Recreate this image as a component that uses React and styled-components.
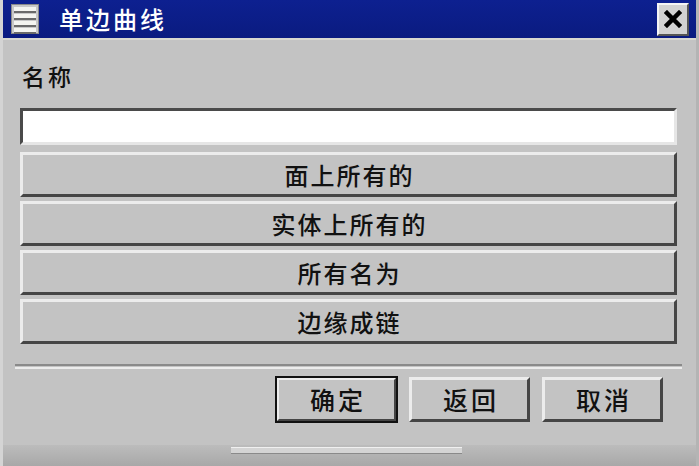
import React, { useState } from 'react';
import styled, { createGlobalStyle } from 'styled-components';

const GlobalStyle = createGlobalStyle`
  html, body {
    margin: 0;
    padding: 0;
    background: #c3c3c3;
  }
  body {
    font-family: "Noto Sans CJK SC", "Noto Sans", sans-serif;
  }
`;

const Window = styled.div`
  width: 699px;
  height: 466px;
  background: #c3c3c3;
  display: flex;
  flex-direction: column;
  box-sizing: border-box;
  border-left: 3px solid #d4d4d4;
  border-right: 3px solid #b4b4b4;
  overflow: hidden;
`;

const TitleBar = styled.div`
  height: 40px;
  flex-shrink: 0;
  margin-left: -3px;
  margin-right: -3px;
  background: linear-gradient(180deg, #0d2090 0%, #0a1b80 100%);
  border-bottom: 2px solid #d8d8d0;
  display: flex;
  align-items: center;
  padding: 0 11px 0 11px;
  box-sizing: border-box;
`;

const Title = styled.span`
  color: #ffffff;
  font-size: 24px;
  font-weight: 500;
  letter-spacing: 3px;
  margin-left: 20px;
  line-height: 1;
  flex: 1;
`;

const CloseButton = styled.button`
  width: 32px;
  height: 33px;
  padding: 0;
  background: #d2d2d2;
  border: 2px solid;
  border-color: #f4f4f4 #555 #555 #f4f4f4;
  display: flex;
  align-items: center;
  justify-content: center;
  margin-right: -1px;
`;

const Body = styled.div`
  flex: 1;
  display: flex;
  flex-direction: column;
  padding: 21px 19px 0 17px;
`;

const Label = styled.div`
  font-size: 23px;
  font-weight: 500;
  letter-spacing: 3px;
  color: #111;
  line-height: 30px;
  margin-left: 2px;
`;

const TextInput = styled.input`
  margin-top: 17px;
  height: 37px;
  box-sizing: border-box;
  background: #fff;
  border: 3px solid;
  border-color: #4a4a4a #e6e6e6 #e6e6e6 #4a4a4a;
  outline: none;
  font-size: 20px;
  padding: 0 6px;
`;

const ListButton = styled.button`
  margin-top: ${p => (p.first ? '7px' : '4px')};
  height: 45px;
  box-sizing: border-box;
  background: #c3c3c3;
  border: 3px solid;
  border-color: #ececec #454545 #454545 #ececec;
  font-family: inherit;
  font-size: 24px;
  font-weight: 500;
  letter-spacing: 2px;
  color: #111;
  padding: 0 0 0 2px;
  line-height: 1;
`;

const Separator = styled.div`
  margin: 20px -5px 0 -5px;
  height: 1px;
  border-top: 2px solid #8a8a8a;
  border-bottom: 2px solid #ececec;
`;

const Footer = styled.div`
  display: flex;
  justify-content: flex-end;
  gap: 12px;
  margin-top: 8px;
  padding-right: 14px;
`;

const ActionButton = styled.button`
  width: 121px;
  height: 45px;
  box-sizing: border-box;
  background: #c3c3c3;
  border: 3px solid;
  border-color: #ececec #454545 #454545 #ececec;
  outline: ${p => (p.primary ? '2px solid #111' : 'none')};
  outline-offset: -1px;
  font-family: inherit;
  font-size: 25px;
  font-weight: 500;
  letter-spacing: 3px;
  color: #111;
  padding: 0 0 0 3px;
  line-height: 1;
`;

const BottomStrip = styled.div`
  margin-top: auto;
  height: 21px;
  margin-left: -20px;
  margin-right: -22px;
  background: linear-gradient(180deg, #bcbcbc 0%, #a8a8a8 100%);
  display: flex;
  justify-content: center;
  padding-top: 2px;
  box-sizing: border-box;
`;

const Grip = styled.div`
  width: 231px;
  height: 5px;
  margin-right: 6px;
  background: #d4d4d4;
  border-top: 1px solid #f0f0f0;
  border-bottom: 1px solid #8a8a8a;
`;

function MenuIcon() {
  return (
    <svg width="28" height="30" viewBox="0 0 28 30">
      <rect x="0" y="0" width="28" height="30" fill="#c8c8c8" />
      <rect x="0" y="0" width="28" height="30" fill="none" stroke="#8a8a8a" strokeWidth="2" />
      {[3, 10, 17, 24].map(y => (
        <g key={y}>
          <rect x="3" y={y} width="22" height="4" fill="#f4f4f0" />
          <rect x="3" y={y + 4} width="22" height="2" fill="#6a6a6a" />
        </g>
      ))}
    </svg>
  );
}

function CloseIcon() {
  return (
    <svg width="18" height="18" viewBox="0 0 18 18">
      <path d="M3 3 L15 15 M15 3 L3 15" stroke="#000" strokeWidth="4.5" strokeLinecap="square" />
    </svg>
  );
}

export default function App() {
  const [name, setName] = useState('');
  const items = ['面上所有的', '实体上所有的', '所有名为', '边缘成链'];

  return (
    <>
      <GlobalStyle />
      <Window>
        <TitleBar>
          <MenuIcon />
          <Title>单边曲线</Title>
          <CloseButton>
            <CloseIcon />
          </CloseButton>
        </TitleBar>
        <Body>
          <Label>名称</Label>
          <TextInput value={name} onChange={e => setName(e.target.value)} />
          {items.map((t, i) => (
            <ListButton key={t} first={i === 0}>{t}</ListButton>
          ))}
          <Separator />
          <Footer>
            <ActionButton primary>确定</ActionButton>
            <ActionButton>返回</ActionButton>
            <ActionButton>取消</ActionButton>
          </Footer>
          <BottomStrip>
            <Grip />
          </BottomStrip>
        </Body>
      </Window>
    </>
  );
}
